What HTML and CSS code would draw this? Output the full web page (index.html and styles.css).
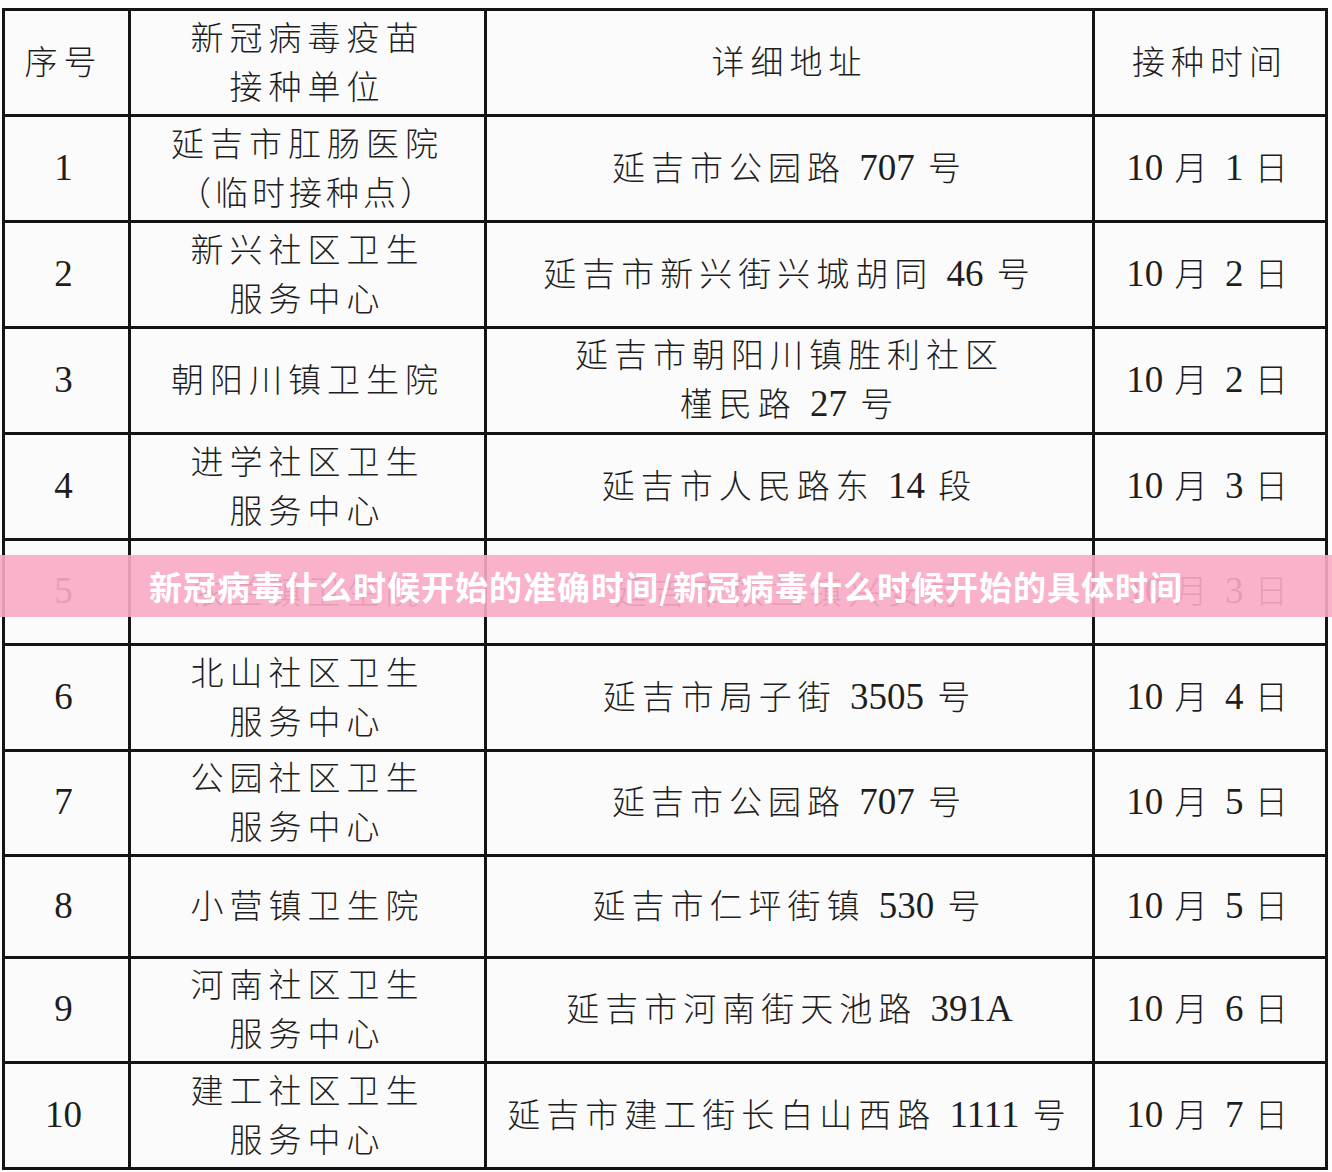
FILE: index.html
```html
<!DOCTYPE html>
<html lang="zh">
<head>
<meta charset="utf-8">
<title>接种时间表</title>
<link rel="stylesheet" href="styles.css">
</head>
<body>
<div class="page">
  <table class="sched">
    <colgroup>
      <col class="c1"><col class="c2"><col class="c3"><col class="c4">
    </colgroup>
    <tr class="r106">
      <td>序号</td>
      <td>新冠病毒疫苗<br>接种单位</td>
      <td>详细地址</td>
      <td>接种时间</td>
    </tr>
    <tr class="r106">
      <td><span class="n">1</span></td>
      <td>延吉市肛肠医院<br><span class="paren">（临时接种点）</span></td>
      <td>延吉市公园路 <span class="n">707</span> 号</td>
      <td class="date"><span class="n">10</span> 月 <span class="n">1</span> 日</td>
    </tr>
    <tr class="r106">
      <td><span class="n">2</span></td>
      <td>新兴社区卫生<br>服务中心</td>
      <td>延吉市新兴街兴城胡同 <span class="n">46</span> 号</td>
      <td class="date"><span class="n">10</span> 月 <span class="n">2</span> 日</td>
    </tr>
    <tr class="r104">
      <td><span class="n">3</span></td>
      <td>朝阳川镇卫生院</td>
      <td>延吉市朝阳川镇胜利社区<br>槿民路 <span class="n">27</span> 号</td>
      <td class="date"><span class="n">10</span> 月 <span class="n">2</span> 日</td>
    </tr>
    <tr class="r106">
      <td><span class="n">4</span></td>
      <td>进学社区卫生<br>服务中心</td>
      <td>延吉市人民路东 <span class="n">14</span> 段</td>
      <td class="date"><span class="n">10</span> 月 <span class="n">3</span> 日</td>
    </tr>
    <tr class="r105">
      <td><span class="n">5</span></td>
      <td>依兰镇卫生院</td>
      <td>延吉市依兰镇兴安村</td>
      <td class="date"><span class="n">10</span> 月 <span class="n">3</span> 日</td>
    </tr>
    <tr class="r106">
      <td><span class="n">6</span></td>
      <td>北山社区卫生<br>服务中心</td>
      <td>延吉市局子街 <span class="n">3505</span> 号</td>
      <td class="date"><span class="n">10</span> 月 <span class="n">4</span> 日</td>
    </tr>
    <tr class="r105">
      <td><span class="n">7</span></td>
      <td>公园社区卫生<br>服务中心</td>
      <td>延吉市公园路 <span class="n">707</span> 号</td>
      <td class="date"><span class="n">10</span> 月 <span class="n">5</span> 日</td>
    </tr>
    <tr class="r102">
      <td><span class="n">8</span></td>
      <td>小营镇卫生院</td>
      <td>延吉市仁坪街镇 <span class="n">530</span> 号</td>
      <td class="date"><span class="n">10</span> 月 <span class="n">5</span> 日</td>
    </tr>
    <tr class="r104">
      <td><span class="n">9</span></td>
      <td>河南社区卫生<br>服务中心</td>
      <td>延吉市河南街天池路 <span class="n">391A</span></td>
      <td class="date"><span class="n">10</span> 月 <span class="n">6</span> 日</td>
    </tr>
    <tr class="r106">
      <td><span class="n">10</span></td>
      <td>建工社区卫生<br>服务中心</td>
      <td>延吉市建工街长白山西路 <span class="n">1111</span> 号</td>
      <td class="date"><span class="n">10</span> 月 <span class="n">7</span> 日</td>
    </tr>
  </table>
  <div class="banner">新冠病毒什么时候开始的准确时间/新冠病毒什么时候开始的具体时间</div>
</div>
</body>
</html>
```

FILE: styles.css
```css
html, body {
  margin: 0;
  padding: 0;
  background: #fdfdfd;
}

.page {
  position: relative;
  width: 1332px;
  height: 1172px;
  padding: 8px 0 0 2px;
  box-sizing: border-box;
  overflow: hidden;
}

.sched {
  border-collapse: collapse;
  table-layout: fixed;
  width: 1325px;
  background: #fbfbfb;
}

.c1 { width: 126px; }
.c2 { width: 356px; }
.c3 { width: 608px; }
.c4 { width: 233px; }

.sched td {
  border: 3px solid #141414;
  padding: 0 0 4px 0;
  text-align: center;
  vertical-align: middle;
  font-family: "Noto Sans CJK SC", "Noto Sans CJK JP", sans-serif;
  font-weight: 300;
  font-size: 33px;
  line-height: 49px;
  letter-spacing: 6px;
  color: #1e1e1e;
}

.sched td:first-child {
  padding-right: 6px;
}

.r106 td { height: 99px; }
.r105 td { height: 98px; }
.r104 td { height: 97px; }
.r102 td { height: 95px; }

.n {
  font-family: "Liberation Serif", "Times New Roman", serif;
  font-size: 37px;
  font-weight: 400;
  letter-spacing: 0;
}

.paren {
  letter-spacing: 4px;
}

.date {
  word-spacing: -2px;
}

.banner {
  position: absolute;
  left: 0;
  top: 555px;
  width: 1332px;
  height: 62px;
  background: rgba(249, 170, 197, 0.9);
  color: #ffffff;
  font-family: "Noto Sans CJK SC", sans-serif;
  font-weight: 700;
  font-size: 33px;
  line-height: 62px;
  text-align: center;
  letter-spacing: 1px;
}
```
